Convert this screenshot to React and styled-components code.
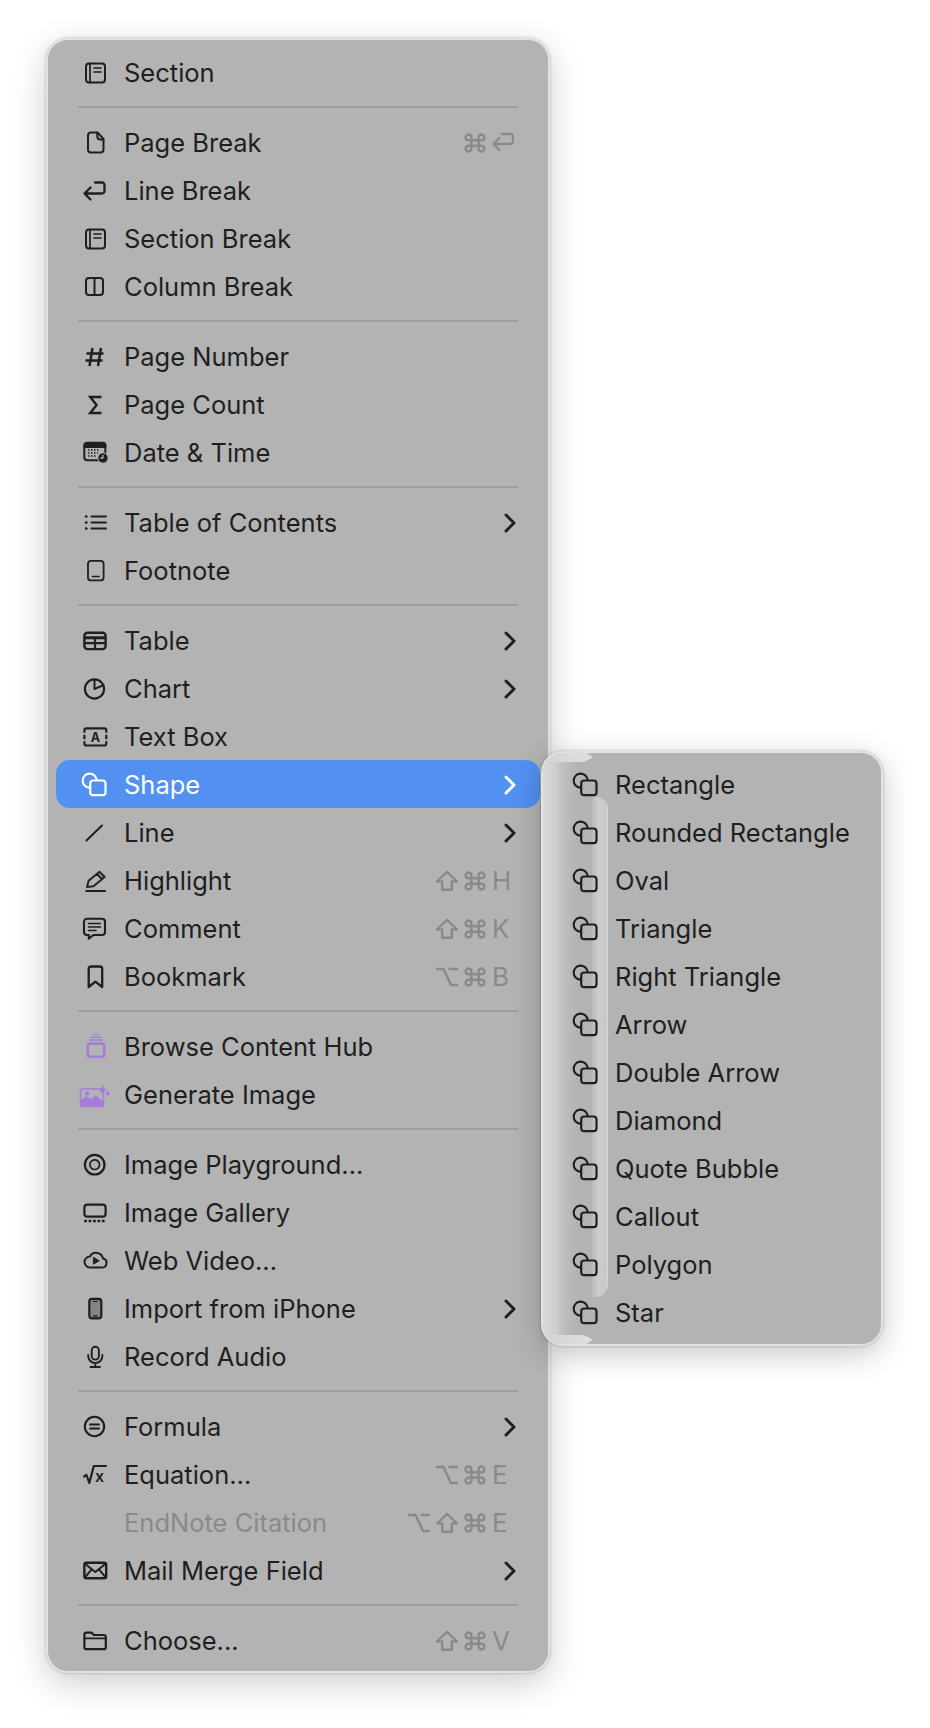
import styled, { createGlobalStyle } from "styled-components";

const GlobalStyle = createGlobalStyle`
  html, body {
    margin: 0;
    background: #fff;
  }
  body {
    font-family: Inter, "Liberation Sans", sans-serif;
  }
`;

const Page = styled.div`
  width: 930px;
  height: 1728px;
  padding: 38px 0 0 46px;
  box-sizing: border-box;
  overflow: hidden;
`;

const MenuWrap = styled.div`
  position: relative;
  width: 504px;
`;

const Panel = styled.div`
  box-sizing: border-box;
  background: #b3b3b3;
  border: 2px solid #e2e2e2;
  border-radius: 22px;
  padding: 8px 8px 7px;
  box-shadow: 0 10px 34px rgba(0, 0, 0, 0.2), 0 0 3px rgba(0, 0, 0, 0.25);
`;

const SubPanel = styled(Panel)`
  position: absolute;
  left: 495px;
  top: 713px;
  width: 342px;
  overflow: hidden;
  box-shadow: 0 8px 30px rgba(0, 0, 0, 0.22), 0 0 3px rgba(0, 0, 0, 0.25);
`;

const GlassEdge = styled.div`
  position: absolute;
  left: 0;
  top: 0;
  bottom: 0;
  width: 34px;
  background: linear-gradient(90deg, #dadada, #cfcfcf 35%, #c2c2c2 55%, #bababa 75%, #b3b3b3);
  border-radius: 20px 0 0 20px;
`;

const GlassCap = styled.div`
  position: absolute;
  left: 6px;
  width: 44px;
  height: 9px;
  background: linear-gradient(90deg, #d4d4d4, #dedede 85%);
  clip-path: ${p =>
    p.$bottom
      ? "polygon(0 0, 78% 0, 100% 50%, 86% 100%, 0 100%)"
      : "polygon(0 0, 86% 0, 100% 50%, 78% 100%, 0 100%)"};
  ${p => (p.$bottom ? "bottom: 0;" : "top: 0;")}
`;

const GlassBand = styled.div`
  position: absolute;
  left: 49px;
  top: 44px;
  bottom: 47px;
  width: 16px;
  background: linear-gradient(90deg, #b9b9b9, #cdcdcd 40%, #c8c8c8 80%, #d4d4d4);
  border-radius: 0 12px 12px 0;
`;

const Row = styled.div`
  position: relative;
  box-sizing: border-box;
  display: flex;
  align-items: center;
  height: 48px;
  border-radius: 14px;
  padding: ${p => (p.$sub ? "0 0 0 16px" : "2px 20px 0 20px")};
  color: ${p => (p.$active ? "#fff" : p.$disabled ? "#8a8a8a" : "#1f1f1f")};
  background: ${p => (p.$active ? "#5290f2" : "transparent")};
`;

const Label = styled.span`
  margin-left: 10px;
  font-size: 25.5px;
  line-height: 46px;
  white-space: nowrap;
`;

const Divider = styled.div`
  height: 2px;
  margin: 10px 22px;
  background: #9e9e9e;
`;

const Glyph = styled.svg`
  flex: none;
  width: 38px;
  height: 32px;
  fill: none;
  stroke: currentColor;
  stroke-width: 2;
  stroke-linecap: round;
  stroke-linejoin: round;
  color: ${p => p.$tint || "inherit"};
`;

const Chevron = styled.svg`
  flex: none;
  width: 14px;
  height: 20px;
  margin-left: auto;
  margin-right: 3px;
  fill: none;
  stroke: currentColor;
  stroke-width: 3;
  stroke-linecap: round;
  stroke-linejoin: round;
`;

const Shortcut = styled.div`
  display: flex;
  align-items: center;
  gap: 6px;
  margin-left: auto;
  color: #8a8a8a;
`;

const KeySvg = styled.svg`
  flex: none;
  width: 22px;
  height: 22px;
  fill: none;
  stroke: currentColor;
  stroke-width: 2.4;
  stroke-linecap: round;
  stroke-linejoin: round;
`;

const KeyCell = styled.span`
  display: flex;
  align-items: center;
  width: 28px;
  font-size: 26px;
  line-height: 32px;
`;

const KEY_PATHS = {
  shift: "M11 1.8 L21 11.5 H15.8 V19.8 H6.2 V11.5 H1 Z",
  cmd: "M14.6 5.4 V16.6 a2.9 2.9 0 1 0 2.9 -2.9 H4.5 a2.9 2.9 0 1 0 2.9 2.9 V5.4 a2.9 2.9 0 1 0 -2.9 2.9 H17.5 a2.9 2.9 0 1 0 -2.9 -2.9",
  opt: "M1 3 H7.5 L15 19 H21 M13.5 3 H21",
  enter: "M10 2 H18.5 a2.5 2.5 0 0 1 2.5 2.5 V9.5 a2.5 2.5 0 0 1 -2.5 2.5 H1.5 M7.5 6 L1.5 12 L7.5 18",
};

const Key = ({ name }) => (
  <KeySvg viewBox="0 0 22 22">
    <path d={KEY_PATHS[name]} />
  </KeySvg>
);

const icons = {
  section: (
    <>
      <rect x="10" y="6.5" width="19" height="19" rx="3" />
      <path d="M14 6.5 V25.5 M18 11 H25 M18 15 H25" strokeWidth="1.7" />
    </>
  ),
  page: (
    <>
      <path d="M15 5.5 H21.5 L27.5 12 V22.5 a3 3 0 0 1 -3 3 H15 a3 3 0 0 1 -3 -3 V8.5 a3 3 0 0 1 3 -3 Z" />
      <path d="M21.3 5.8 V9.5 a3 3 0 0 0 3 3 H27.3" />
    </>
  ),
  lineBreak: <path d="M19 7.5 H26 a2.5 2.5 0 0 1 2.5 2.5 V16 a2.5 2.5 0 0 1 -2.5 2.5 H8.5 M14.5 12.5 L8.5 18.5 L14.5 24.5" strokeWidth="2.3" />,
  column: (
    <>
      <rect x="10" y="7" width="17" height="17" rx="3" />
      <path d="M18.5 7 V24" />
    </>
  ),
  hash: <path d="M16.5 7 L13.5 25 M25 7 L22 25 M10.5 12.5 H27.5 M9.5 19.5 H26.5" strokeWidth="2.5" strokeLinecap="butt" />,
  sigma: <path d="M25.5 8 H14.2 L20.6 16 L14.2 24 H25.5" strokeWidth="2.4" strokeLinecap="butt" strokeLinejoin="miter" />,
  date: (
    <>
      <rect x="8.3" y="5.7" width="21" height="17.5" rx="3" />
      <path d="M8.5 8.5 a2.5 2.5 0 0 1 2.5 -2.5 H27 a2.5 2.5 0 0 1 2.5 2.5 V10 H8.5 Z" fill="currentColor" />
      <path d="M12 13 H24 M12 16 H22 M12 19 H21" strokeWidth="1.5" strokeDasharray="1.5 1.5" strokeLinecap="butt" />
      <circle cx="27" cy="21" r="5.2" fill="currentColor" stroke="#b3b3b3" strokeWidth="1" />
      <path d="M27 18.3 V21 H24.8" stroke="#b3b3b3" strokeWidth="1.3" />
    </>
  ),
  toc: (
    <>
      <path d="M15.5 9.5 H30 M15.5 15.5 H30 M15.5 21.5 H30" />
      <circle cx="10.2" cy="9.5" r="1" fill="currentColor" strokeWidth="0.8" />
      <circle cx="10.2" cy="15.5" r="1" fill="currentColor" strokeWidth="0.8" />
      <circle cx="10.2" cy="21.5" r="1" fill="currentColor" strokeWidth="0.8" />
    </>
  ),
  footnote: (
    <>
      <rect x="12" y="5.8" width="15.6" height="19.6" rx="3" strokeWidth="1.8" />
      <path d="M16.5 21.5 H23" strokeWidth="1.6" />
    </>
  ),
  table: (
    <>
      <rect x="8.4" y="7.7" width="21.2" height="16.4" rx="3" strokeWidth="2.4" />
      <path d="M8.4 12.8 H29.6" strokeWidth="3" strokeLinecap="butt" />
      <path d="M8.4 18.2 H29.6 M19 12.5 V24" strokeWidth="2.2" strokeLinecap="butt" />
    </>
  ),
  chart: (
    <>
      <circle cx="18.5" cy="16" r="9.6" strokeWidth="2.2" />
      <path d="M18.5 7 V16 L27.5 12.2" strokeWidth="2" />
    </>
  ),
  textBox: (
    <>
      <path d="M8.4 11 V9.3 a2 2 0 0 1 2 -2 H28.3 a2 2 0 0 1 2 2 V11 M30.3 14.5 V17.5 M30.3 21 V22.5 a2 2 0 0 1 -2 2 H10.4 a2 2 0 0 1 -2 -2 V21 M8.4 14.5 V17.5" strokeWidth="2.2" />
      <text x="19.3" y="21" textAnchor="middle" fontSize="12.5" fontWeight="700" fontFamily="Inter, sans-serif" fill="currentColor" stroke="none">A</text>
    </>
  ),
  shape: (
    <>
      <path d="M20.6 10.5 A7 7 0 1 0 13.2 18.6" strokeWidth="2.1" />
      <rect x="14.2" y="11.5" width="15.3" height="14.7" rx="3" strokeWidth="2.2" />
    </>
  ),
  line: <path d="M10.5 23.5 L26 8.5" />,
  highlight: (
    <>
      <path d="M11 22 L12.6 15.8 L23.6 6.8 L28.6 12 L17.5 21.2 Z M21 9 L26 14" strokeWidth="1.9" />
      <path d="M9.5 26 H29.8" strokeWidth="2" strokeLinecap="butt" />
    </>
  ),
  comment: (
    <>
      <path d="M11 5.8 H26 a3 3 0 0 1 3 3 V19 a3 3 0 0 1 -3 3 H17.5 L12.8 25.6 V22 H11 a3 3 0 0 1 -3 -3 V8.8 a3 3 0 0 1 3 -3 Z" strokeWidth="2.1" />
      <path d="M12.5 10.5 H24.5 M12.5 14 H24.5 M12.5 17.5 H20" strokeWidth="1.5" />
    </>
  ),
  bookmark: <path d="M12.7 8 a2.5 2.5 0 0 1 2.5 -2.5 H23.7 a2.5 2.5 0 0 1 2.5 2.5 V26 L19.4 20.6 L12.7 26 Z" strokeWidth="2.3" />,
  hub: (
    <>
      <rect x="11.8" y="12.4" width="16.4" height="13.4" rx="2" strokeWidth="2.5" />
      <path d="M13.8 9 H26.2" strokeWidth="1.6" />
      <path d="M14.8 6.3 H25.2" strokeWidth="1.4" />
      <path d="M16 3.5 H24" strokeWidth="1.2" />
    </>
  ),
  generate: (
    <>
      <path d="M25 10 H7 a2.5 2.5 0 0 0 -2.5 2.5 V25 a2.5 2.5 0 0 0 2.5 2.5 H25 a2.5 2.5 0 0 0 2.5 -2.5 V15" strokeWidth="1.6" />
      <path d="M5 27 V22.5 L10.5 18 L15 21.5 L19.5 17.5 L27 23 V27 Z" fill="currentColor" stroke="currentColor" />
      <circle cx="11" cy="14.5" r="2.2" fill="currentColor" stroke="none" />
      <path d="M26.6 4.5 Q27 10 31 11 Q27 12 26.6 17 Q26 12 22.5 11 Q26 10 26.6 4.5 Z" fill="currentColor" stroke="none" />
      <path d="M31.6 10.5 Q32 13.8 34.5 14.3 Q32 15 31.6 18 Q31.2 15 28.8 14.3 Q31.2 13.8 31.6 10.5 Z" fill="currentColor" stroke="none" />
    </>
  ),
  playground: (
    <>
      <circle cx="18.7" cy="15.7" r="9.8" strokeWidth="2.2" />
      <circle cx="18.7" cy="15.7" r="4.8" strokeWidth="1.7" strokeDasharray="3 0.8" />
    </>
  ),
  gallery: (
    <>
      <rect x="8.4" y="7.7" width="21.2" height="12" rx="3" strokeWidth="2.2" />
      <path d="M8.2 24 H30" strokeWidth="2.4" strokeDasharray="2.8 1.6" strokeLinecap="butt" />
    </>
  ),
  video: (
    <>
      <path d="M14 22.5 H26 a4.5 4.5 0 0 0 1 -8.9 A7 7 0 0 0 14 11.5 A5.5 5.5 0 0 0 14 22.5 Z" strokeWidth="2" />
      <path d="M17.7 12.5 L23.2 15.8 L17.7 19 Z" fill="currentColor" strokeWidth="1" />
    </>
  ),
  phone: (
    <>
      <rect x="13.3" y="5.8" width="12" height="19.6" rx="2.6" fill="#858585" strokeWidth="2.2" />
      <path d="M17.3 8.5 H21.3 M17.3 22.8 H21.3" strokeWidth="1.2" />
    </>
  ),
  mic: (
    <>
      <rect x="15.7" y="5.8" width="7.2" height="12.8" rx="3.6" strokeWidth="1.9" />
      <path d="M12.2 14 V15 a7.1 7.1 0 0 0 14.2 0 V14 M19.3 22.2 V26 M14.5 26 H24" strokeWidth="1.9" />
    </>
  ),
  formula: (
    <>
      <circle cx="18.5" cy="15.5" r="9.7" strokeWidth="2.1" />
      <path d="M14 13.5 H23 M14 17.5 H23" strokeWidth="1.8" />
    </>
  ),
  equation: (
    <>
      <path d="M8 17.5 L10.5 16 L13.3 24 L17.8 7 H30" strokeWidth="2.2" />
      <text x="23.5" y="22.5" textAnchor="middle" fontSize="16" fontWeight="600" fontFamily="Inter, sans-serif" fill="currentColor" stroke="none">x</text>
    </>
  ),
  mail: (
    <>
      <rect x="8.4" y="7.8" width="21.8" height="15.4" rx="2" strokeWidth="2.4" />
      <path d="M9 8.8 L19.3 17 L29.6 8.8 M9 22.4 L15.6 14.4 M29.6 22.4 L23 14.4" strokeWidth="2" />
    </>
  ),
  folder: (
    <>
      <path d="M8.4 22.2 V9.6 a2 2 0 0 1 2 -2 H15.5 L18 10 H27.8 a2 2 0 0 1 2 2 V22.2 a2 2 0 0 1 -2 2 H10.4 a2 2 0 0 1 -2 -2 Z" strokeWidth="2.2" />
      <path d="M8.4 13.3 H29.8" strokeWidth="1.8" />
    </>
  ),
};

const PURPLE = "#a47cdb";

const MENU = [
  [{ icon: "section", label: "Section" }],
  [
    { icon: "page", label: "Page Break", keys: ["cmd"], end: "enter" },
    { icon: "lineBreak", label: "Line Break" },
    { icon: "section", label: "Section Break" },
    { icon: "column", label: "Column Break" },
  ],
  [
    { icon: "hash", label: "Page Number" },
    { icon: "sigma", label: "Page Count" },
    { icon: "date", label: "Date & Time" },
  ],
  [
    { icon: "toc", label: "Table of Contents", more: true },
    { icon: "footnote", label: "Footnote" },
  ],
  [
    { icon: "table", label: "Table", more: true },
    { icon: "chart", label: "Chart", more: true },
    { icon: "textBox", label: "Text Box" },
    { icon: "shape", label: "Shape", more: true, active: true },
    { icon: "line", label: "Line", more: true },
    { icon: "highlight", label: "Highlight", keys: ["shift", "cmd"], letter: "H" },
    { icon: "comment", label: "Comment", keys: ["shift", "cmd"], letter: "K" },
    { icon: "bookmark", label: "Bookmark", keys: ["opt", "cmd"], letter: "B" },
  ],
  [
    { icon: "hub", label: "Browse Content Hub", tint: PURPLE },
    { icon: "generate", label: "Generate Image", tint: PURPLE },
  ],
  [
    { icon: "playground", label: "Image Playground..." },
    { icon: "gallery", label: "Image Gallery" },
    { icon: "video", label: "Web Video..." },
    { icon: "phone", label: "Import from iPhone", more: true },
    { icon: "mic", label: "Record Audio" },
  ],
  [
    { icon: "formula", label: "Formula", more: true },
    { icon: "equation", label: "Equation...", keys: ["opt", "cmd"], letter: "E" },
    { label: "EndNote Citation", keys: ["opt", "shift", "cmd"], letter: "E", disabled: true },
    { icon: "mail", label: "Mail Merge Field", more: true },
  ],
  [{ icon: "folder", label: "Choose...", keys: ["shift", "cmd"], letter: "V" }],
];

const SHAPES = [
  "Rectangle",
  "Rounded Rectangle",
  "Oval",
  "Triangle",
  "Right Triangle",
  "Arrow",
  "Double Arrow",
  "Diamond",
  "Quote Bubble",
  "Callout",
  "Polygon",
  "Star",
];

const MenuItem = ({ item }) => (
  <Row $active={item.active} $disabled={item.disabled}>
    <Glyph viewBox="0 0 38 32" $tint={item.tint}>
      {item.icon && icons[item.icon]}
    </Glyph>
    <Label>{item.label}</Label>
    {item.more && (
      <Chevron viewBox="0 0 14 20">
        <path d="M3 2 L11 10 L3 18" />
      </Chevron>
    )}
    {item.keys && (
      <Shortcut>
        {item.keys.map(k => (
          <Key key={k} name={k} />
        ))}
        <KeyCell>{item.end ? <Key name={item.end} /> : item.letter}</KeyCell>
      </Shortcut>
    )}
  </Row>
);

export default function App() {
  return (
    <Page>
      <GlobalStyle />
      <MenuWrap>
        <Panel>
          {MENU.map((group, i) => (
            <div key={i}>
              {i > 0 && <Divider />}
              {group.map(item => (
                <MenuItem key={item.label} item={item} />
              ))}
            </div>
          ))}
        </Panel>
        <SubPanel>
          <GlassEdge />
          <GlassCap />
          <GlassCap $bottom />
          <GlassBand />
          {SHAPES.map(name => (
            <Row $sub key={name}>
              <Glyph viewBox="0 0 38 32">{icons.shape}</Glyph>
              <Label>{name}</Label>
            </Row>
          ))}
        </SubPanel>
      </MenuWrap>
    </Page>
  );
}
